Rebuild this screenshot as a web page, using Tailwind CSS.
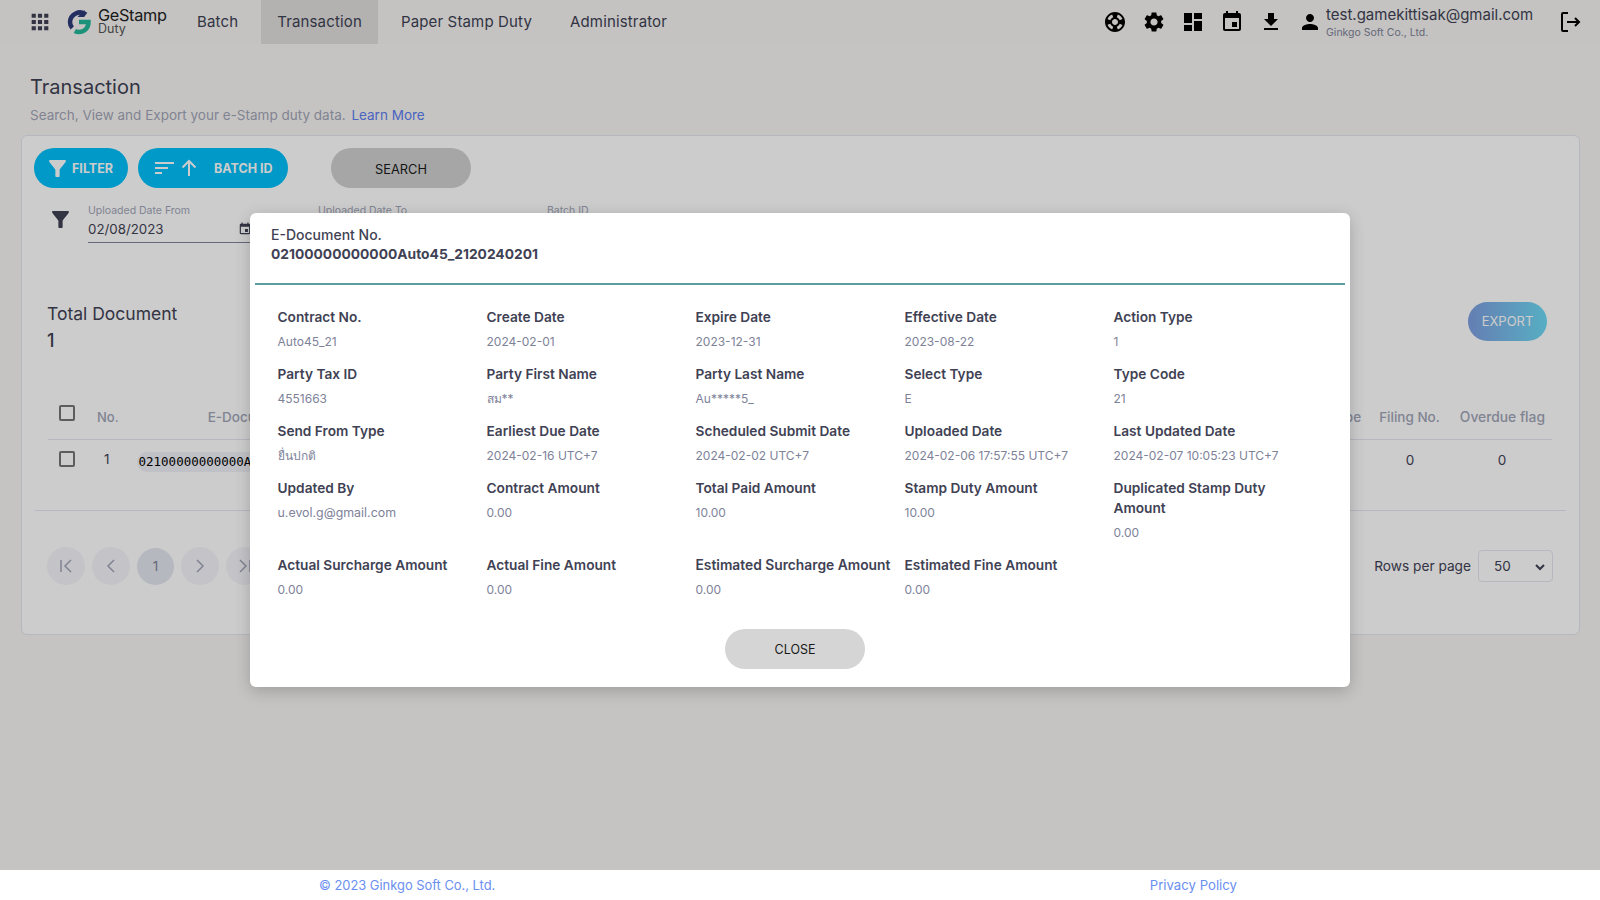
<!DOCTYPE html>
<html lang="en">
<head>
<meta charset="UTF-8">
<title>Transaction</title>
<script src="https://cdn.jsdelivr.net/npm/@tailwindcss/browser@4"></script>
</head>
<body class="relative h-[900px] w-[1600px] overflow-hidden bg-white font-['Inter','Noto_Sans',sans-serif] text-[#3f4254]">

<div class="flex h-[870px] flex-col bg-[#f8f6f3]">
  <!-- top nav -->
  <nav class="flex h-[44px] items-center bg-[#f5f4f2] pl-[30px] pr-[18px]">
    <svg class="h-[20px] w-[20px] scale-125 text-[#3f4254]" viewBox="0 0 24 24" fill="currentColor"><path d="M4 8h4V4H4v4zm6 12h4v-4h-4v4zm-6 0h4v-4H4v4zm0-6h4v-4H4v4zm6 0h4v-4h-4v4zm6-10v4h4V4h-4zm-6 4h4V4h-4v4zm6 6h4v-4h-4v4zm0 6h4v-4h-4v4z"/></svg>
    <svg class="ml-[17px] h-[26px] w-[24px]" viewBox="0 0 24 26" fill="none" stroke-width="4.5"><path d="M19 5.500A10 10 0 0 0 3 13c0 2.500.8 4.500 2.200 6" stroke="#2f3a78"/><path d="M12 13h9.500c0 6-4 10-9.500 10-1.500 0-3-.3-4.200-1" stroke="#25b79a"/><path d="M17.500 1v7h-7z" fill="#2f3a78" stroke="none"/></svg>
    <div class="ml-[7px] flex w-[72px] flex-col pb-[3px]">
      <span class="text-[16.300px] leading-[15px] tracking-[-0.02em] text-[#222]">GeStamp</span>
      <span class="text-[12.500px] leading-[11px] text-[#555]">Duty</span>
    </div>
    <div class="ml-[27px] flex h-full items-center text-[15px] tracking-[0.01em] text-[#3f4254]">
      <a>Batch</a>
      <a class="ml-[23px] flex h-full items-center bg-[#e0dfdd] px-[16px]">Transaction</a>
      <a class="ml-[23px]">Paper Stamp Duty</a>
      <a class="ml-[38px]">Administrator</a>
    </div>
    <div class="ml-auto flex items-center text-black">
      <svg class="h-[24px] w-[24px]" viewBox="0 0 24 24" fill="currentColor"><path d="M12 2C6.480 2 2 6.480 2 12s4.480 10 10 10 10-4.480 10-10S17.520 2 12 2zm7.460 7.120l-2.780 1.150c-.51-1.360-1.580-2.440-2.950-2.940l1.150-2.780c2.100.8 3.770 2.470 4.580 4.570zM12 15c-1.660 0-3-1.340-3-3s1.340-3 3-3 3 1.340 3 3-1.340 3-3 3zM9.130 4.540l1.170 2.780c-1.380.5-2.470 1.590-2.980 2.970L4.540 9.130c.81-2.110 2.480-3.780 4.590-4.590zM4.540 14.870l2.780-1.150c.51 1.380 1.590 2.460 2.970 2.960l-1.170 2.780c-2.100-.81-3.770-2.480-4.580-4.590zm10.340 4.590l-1.150-2.780c1.370-.51 2.450-1.590 2.950-2.970l2.780 1.170c-.81 2.100-2.480 3.770-4.580 4.580z"/></svg>
      <svg class="ml-[15px] h-[24px] w-[24px]" viewBox="0 0 24 24" fill="currentColor"><path d="M19.140 12.940c.04-.3.06-.61.06-.94 0-.32-.02-.64-.07-.94l2.030-1.580c.18-.14.23-.41.12-.61l-1.920-3.320c-.12-.22-.37-.29-.59-.22l-2.390.96c-.5-.38-1.030-.7-1.620-.94l-.36-2.540c-.04-.24-.24-.41-.48-.41h-3.840c-.24 0-.43.17-.47.41l-.36 2.540c-.59.24-1.130.57-1.620.94l-2.390-.96c-.22-.08-.47 0-.59.22L2.740 8.870c-.12.21-.08.47.12.61l2.030 1.580c-.05.3-.09.63-.09.94s.02.64.07.94l-2.030 1.580c-.18.14-.23.41-.12.61l1.920 3.320c.12.22.37.29.59.22l2.390-.96c.5.38 1.030.7 1.620.94l.36 2.540c.05.24.24.41.48.41h3.840c.24 0 .44-.17.47-.41l.36-2.540c.59-.24 1.130-.56 1.620-.94l2.390.96c.22.08.47 0 .59-.22l1.920-3.320c.12-.22.07-.47-.12-.61l-2.010-1.580zM12 15.600c-1.980 0-3.600-1.620-3.600-3.600s1.620-3.600 3.600-3.600 3.600 1.620 3.600 3.600-1.620 3.600-3.600 3.600z"/></svg>
      <svg class="ml-[15px] h-[24px] w-[24px]" viewBox="0 0 24 24" fill="currentColor"><path d="M3 13h8V3H3v10zm0 8h8v-6H3v6zm10 0h8V11h-8v10zm0-18v6h8V3h-8z"/></svg>
      <svg class="ml-[15px] h-[24px] w-[24px]" viewBox="0 0 24 24" fill="currentColor"><path d="M17 12h-5v5h5v-5zM16 1v2H8V1H6v2H5c-1.110 0-1.990.9-1.990 2L3 19c0 1.100.89 2 2 2h14c1.100 0 2-.9 2-2V5c0-1.100-.9-2-2-2h-1V1h-2zm3 18H5V8h14v11z"/></svg>
      <svg class="ml-[15px] h-[24px] w-[24px]" viewBox="0 0 24 24" fill="currentColor"><path d="M19 9h-4V3H9v6H5l7 7 7-7zM5 18v2h14v-2H5z"/></svg>
      <svg class="ml-[15px] h-[24px] w-[24px]" viewBox="0 0 24 24" fill="currentColor"><path d="M12 12c2.210 0 4-1.790 4-4s-1.790-4-4-4-4 1.790-4 4 1.790 4 4 4zm0 2c-2.670 0-8 1.340-8 4v2h16v-2c0-2.660-5.330-4-8-4z"/></svg>
      <div class="ml-[4px] flex w-[232px] flex-col">
        <span class="text-[15px] leading-[19px] text-[#3f4254]">test.gamekittisak@gmail.com</span>
        <span class="mt-[2px] text-[10.500px] leading-[14px] text-[#7e8299]">Ginkgo Soft Co., Ltd.</span>
      </div>
      <svg class="h-[24px] w-[24px]" viewBox="0 0 24 24" fill="none" stroke="currentColor" stroke-width="2"><path d="M10 3H5a1 1 0 0 0-1 1v16a1 1 0 0 0 1 1h5M9 12h12M17 8l4 4-4 4"/></svg>
    </div>
  </nav>

  <main class="px-[21px]">
    <div class="pl-[9px] pt-[30px]">
      <h1 class="text-[20px] leading-[26px] text-[#3f4254]">Transaction</h1>
      <p class="mt-[4px] text-[13.500px] leading-[22px] text-[#a1a5b7]">Search, View and Export your e-Stamp duty data. <a class="ml-[2px] text-[#5c7cf0]">Learn More</a></p>
    </div>

    <!-- card -->
    <section class="mt-[9px] h-[500px] w-[1559px] rounded-[6px] border border-[#e4e6ef] bg-white">
      <div class="flex items-center pl-[12px] pt-[12px]">
        <button class="flex h-[40px] w-[94px] items-center justify-center gap-[6px] rounded-full bg-[#00c0fa] text-[12.500px] font-bold text-white">
          <svg class="h-[17px] w-[17px]" viewBox="4 4 16 16" fill="currentColor"><path d="M4.250 5.610C6.270 8.200 10 13 10 13v6c0 .55.45 1 1 1h2c.55 0 1-.45 1-1v-6s3.720-4.800 5.740-7.390c.51-.66.04-1.610-.79-1.610H5.040c-.83 0-1.300.95-.79 1.610z"/></svg>
          <span class="pt-[3px]">FILTER</span>
        </button>
        <button class="ml-[10px] flex h-[40px] w-[150px] items-center rounded-full bg-[#00c0fa] pl-[16px] text-[12.500px] font-bold text-white">
          <svg class="h-[20px] w-[20px]" viewBox="0 0 20 20" fill="none" stroke="currentColor" stroke-width="2"><path d="M1 5h19M1 10h13M1 15h7"/></svg>
          <svg class="ml-[5px] h-[20px] w-[20px]" viewBox="0 0 20 20" fill="none" stroke="currentColor" stroke-width="2"><path d="M10 18V3M3.500 9.500L10 3l6.500 6.500"/></svg>
          <span class="ml-[15px] pt-[3px]">BATCH ID</span>
        </button>
        <button class="ml-[43px] h-[40px] w-[140px] rounded-full bg-[#d0d0d0] pt-[3px] text-[12.800px] text-[#1a1a1a]">SEARCH</button>
      </div>

      <div class="flex pl-[30px] pt-[16px]">
        <svg class="mt-[7px] h-[17px] w-[17px] text-[#3f4254]" viewBox="4 4 16 16" fill="currentColor"><path d="M4.250 5.610C6.270 8.200 10 13 10 13v6c0 .55.45 1 1 1h2c.55 0 1-.45 1-1v-6s3.720-4.800 5.740-7.390c.51-.66.04-1.610-.79-1.610H5.040c-.83 0-1.300.95-.79 1.610z"/></svg>
        <div class="ml-[19px] w-[162px] border-b border-[#7e8299]">
          <div class="text-[10.500px] leading-[14px] text-[#a1a5b7]">Uploaded Date From</div>
          <div class="flex items-center justify-between pb-[2px] text-[13.300px] leading-[22px]">
            02/08/2023
            <svg class="mr-[-2px] h-[14px] w-[14px] text-[#3f4254]" viewBox="0 0 24 24" fill="currentColor"><path d="M17 12h-5v5h5v-5zM16 1v2H8V1H6v2H5c-1.110 0-1.990.9-1.990 2L3 19c0 1.100.89 2 2 2h14c1.100 0 2-.9 2-2V5c0-1.100-.9-2-2-2h-1V1h-2zm3 18H5V8h14v11z"/></svg>
          </div>
        </div>
        <div class="ml-[68px] w-[150px] text-[10.500px] leading-[14px] text-[#a1a5b7]">Uploaded Date To</div>
        <div class="ml-[79px] text-[10.500px] leading-[14px] text-[#a1a5b7]">Batch ID</div>
      </div>

      <div class="flex items-start justify-between pl-[25px] pr-[32px] pt-[58px]">
        <div>
          <div class="text-[17.500px] leading-[26px]">Total Document</div>
          <div class="text-[18px] font-medium leading-[27px]">1</div>
        </div>
        <button class="mt-[1px] h-[39px] w-[79px] rounded-full bg-gradient-to-r from-[#7d9ee0] to-[#6cdaf5] text-[13px] text-white">EXPORT</button>
      </div>

      <!-- table -->
      <div class="ml-[26px] mr-[27px] mt-[48px] flex h-[38px] items-start border-b border-[#e4e6ef] text-[13.500px] font-medium text-[#a1a5b7]">
        <span class="ml-[11px] mt-[3px] h-[16px] w-[16px] rounded-[2px] border-2 border-[#757575]"></span>
        <span class="ml-[22px] mt-[5px] text-[13px] leading-[20px]">No.</span>
        <span class="ml-[89px] mt-[5px] leading-[20px]">E-Document No.</span>
        <span class="ml-auto mt-[5px] leading-[20px]">Type</span>
        <span class="ml-[18px] mt-[5px] leading-[20px]">Filing No.</span>
        <span class="ml-[20px] mr-[7px] mt-[5px] text-[13.800px] leading-[20px]">Overdue flag</span>
      </div>
      <div class="ml-[26px] mr-[27px] flex h-[70px] items-start text-[13.500px]">
        <span class="ml-[11px] mt-[11px] h-[16px] w-[16px] rounded-[2px] border-2 border-[#757575]"></span>
        <span class="ml-[29px] mt-[9px] leading-[20px]">1</span>
        <span class="ml-[27px] mt-[12px] h-[20px] rounded-full bg-[#f1f2f8] px-[2px] font-['DejaVu_Sans_Mono',monospace] text-[12.500px] leading-[20px] text-black">02100000000000Auto45_2120240201</span>
        <span class="ml-auto mt-[10px] w-[72px] text-center leading-[20px]">0</span>
        <span class="ml-[10px] mr-[4px] mt-[10px] w-[92px] text-center leading-[20px]">0</span>
      </div>
      <div class="ml-[13px] mr-[13px] border-t border-[#e4e6ef]"></div>

      <!-- pagination -->
      <div class="flex items-center pl-[25px] pr-[26px] pt-[36px]">
        <div class="flex items-center gap-[7px] text-[#a1a5b7]">
          <span class="flex h-[38px] w-[38px] items-center justify-center rounded-full bg-[#f5f6fa]"><svg class="h-[16px] w-[16px]" viewBox="0 0 16 16" fill="none" stroke="currentColor" stroke-width="1.500"><path d="M3 2v12M13 2L7 8l6 6"/></svg></span>
          <span class="flex h-[38px] w-[38px] items-center justify-center rounded-full bg-[#f5f6fa]"><svg class="h-[16px] w-[16px]" viewBox="0 0 16 16" fill="none" stroke="currentColor" stroke-width="1.500"><path d="M11 2L5 8l6 6"/></svg></span>
          <span class="flex h-[37px] w-[37px] items-center justify-center rounded-full bg-[#e4e6ef] text-[13.500px] text-[#7e8299]">1</span>
          <span class="flex h-[38px] w-[38px] items-center justify-center rounded-full bg-[#f5f6fa]"><svg class="h-[16px] w-[16px]" viewBox="0 0 16 16" fill="none" stroke="currentColor" stroke-width="1.500"><path d="M5 2l6 6-6 6"/></svg></span>
          <span class="flex h-[38px] w-[38px] items-center justify-center rounded-full bg-[#f5f6fa]"><svg class="h-[16px] w-[16px]" viewBox="0 0 16 16" fill="none" stroke="currentColor" stroke-width="1.500"><path d="M3 2l6 6-6 6M13 2v12"/></svg></span>
        </div>
        <span class="ml-auto text-[13.700px]">Rows per page</span>
        <div class="ml-[7px] flex h-[32px] w-[75px] items-center justify-between rounded-[4px] border border-[#e4e6ef] pl-[15px] pr-[6px] pt-[1px] text-[13.500px]">
          50
          <svg class="h-[12px] w-[12px]" viewBox="0 0 12 12" fill="none" stroke="currentColor" stroke-width="2"><path d="M2 4l4 4 4-4"/></svg>
        </div>
      </div>
    </section>
  </main>
</div>

<footer class="flex h-[30px] items-center pt-[2px] text-[12.900px] text-[#6b8ff0]">
  <span class="ml-[319px]">© 2023 Ginkgo Soft Co., Ltd.</span>
  <a class="ml-auto mr-[363px] text-[13.200px]">Privacy Policy</a>
</footer>

<!-- dimmed page + detail modal -->
<div class="absolute inset-x-0 top-0 h-[870px] bg-black/20">
  <div class="absolute left-[250px] top-[213px] h-[474px] w-[1100px] rounded-[6px] bg-white shadow-[0_4px_16px_rgba(0,0,0,0.2)]">
    <div class="mx-[5px] h-[72px] border-b-2 border-[#5a9ea0] pl-[16px] pt-[12px]">
      <div class="text-[14px] font-medium leading-[19px]">E-Document No.</div>
      <div class="text-[13.800px] font-bold leading-[20px]">02100000000000Auto45_2120240201</div>
    </div>
    <div class="grid grid-cols-[209px_209px_209px_209px_209px] pl-[27.500px] pt-[21.500px] text-[12px] leading-[20px] text-[#7e8299]">
      <div class="h-[57px]"><div class="text-[13.700px] font-semibold text-[#3f4254]">Contract No.</div><div class="mt-[5.500px]">Auto45_21</div></div>
      <div><div class="text-[13.700px] font-semibold text-[#3f4254]">Create Date</div><div class="mt-[5.500px]">2024-02-01</div></div>
      <div><div class="text-[13.700px] font-semibold text-[#3f4254]">Expire Date</div><div class="mt-[5.500px]">2023-12-31</div></div>
      <div><div class="text-[13.700px] font-semibold text-[#3f4254]">Effective Date</div><div class="mt-[5.500px]">2023-08-22</div></div>
      <div><div class="text-[13.700px] font-semibold text-[#3f4254]">Action Type</div><div class="mt-[5.500px]">1</div></div>

      <div class="h-[57px]"><div class="text-[13.700px] font-semibold text-[#3f4254]">Party Tax ID</div><div class="mt-[5.500px]">4551663</div></div>
      <div><div class="text-[13.700px] font-semibold text-[#3f4254]">Party First Name</div><div class="mt-[5.500px]">สม**</div></div>
      <div><div class="text-[13.700px] font-semibold text-[#3f4254]">Party Last Name</div><div class="mt-[5.500px]">Au*****5_</div></div>
      <div><div class="text-[13.700px] font-semibold text-[#3f4254]">Select Type</div><div class="mt-[5.500px]">E</div></div>
      <div><div class="text-[13.700px] font-semibold text-[#3f4254]">Type Code</div><div class="mt-[5.500px]">21</div></div>

      <div class="h-[57px]"><div class="text-[13.700px] font-semibold text-[#3f4254]">Send From Type</div><div class="mt-[5.500px]">ยื่นปกติ</div></div>
      <div><div class="text-[13.700px] font-semibold text-[#3f4254]">Earliest Due Date</div><div class="mt-[5.500px]">2024-02-16 UTC+7</div></div>
      <div><div class="whitespace-nowrap text-[13.700px] font-semibold text-[#3f4254]">Scheduled Submit Date</div><div class="mt-[5.500px]">2024-02-02 UTC+7</div></div>
      <div><div class="text-[13.700px] font-semibold text-[#3f4254]">Uploaded Date</div><div class="mt-[5.500px]">2024-02-06 17:57:55 UTC+7</div></div>
      <div><div class="text-[13.700px] font-semibold text-[#3f4254]">Last Updated Date</div><div class="mt-[5.500px]">2024-02-07 10:05:23 UTC+7</div></div>

      <div class="h-[77px]"><div class="text-[13.700px] font-semibold text-[#3f4254]">Updated By</div><div class="mt-[5.500px] text-[12.400px]">u.evol.g@gmail.com</div></div>
      <div><div class="text-[13.700px] font-semibold text-[#3f4254]">Contract Amount</div><div class="mt-[5.500px]">0.00</div></div>
      <div><div class="text-[13.700px] font-semibold text-[#3f4254]">Total Paid Amount</div><div class="mt-[5.500px]">10.00</div></div>
      <div><div class="text-[13.700px] font-semibold text-[#3f4254]">Stamp Duty Amount</div><div class="mt-[5.500px]">10.00</div></div>
      <div><div class="w-[175px] text-[13.700px] font-semibold text-[#3f4254]">Duplicated Stamp Duty Amount</div><div class="mt-[5.500px]">0.00</div></div>

      <div><div class="text-[13.700px] font-semibold text-[#3f4254]">Actual Surcharge Amount</div><div class="mt-[5.500px]">0.00</div></div>
      <div><div class="text-[13.700px] font-semibold text-[#3f4254]">Actual Fine Amount</div><div class="mt-[5.500px]">0.00</div></div>
      <div><div class="whitespace-nowrap text-[13.800px] font-semibold text-[#3f4254]">Estimated Surcharge Amount</div><div class="mt-[5.500px]">0.00</div></div>
      <div><div class="text-[13.700px] font-semibold text-[#3f4254]">Estimated Fine Amount</div><div class="mt-[5.500px]">0.00</div></div>
    </div>
    <div class="mt-[28.500px] flex justify-center pr-[10px]">
      <button class="h-[40px] w-[140px] rounded-full bg-[#d5d5d5] pt-[3px] text-[12.500px] text-[#1a1a1a]">CLOSE</button>
    </div>
  </div>
</div>
</body>
</html>
